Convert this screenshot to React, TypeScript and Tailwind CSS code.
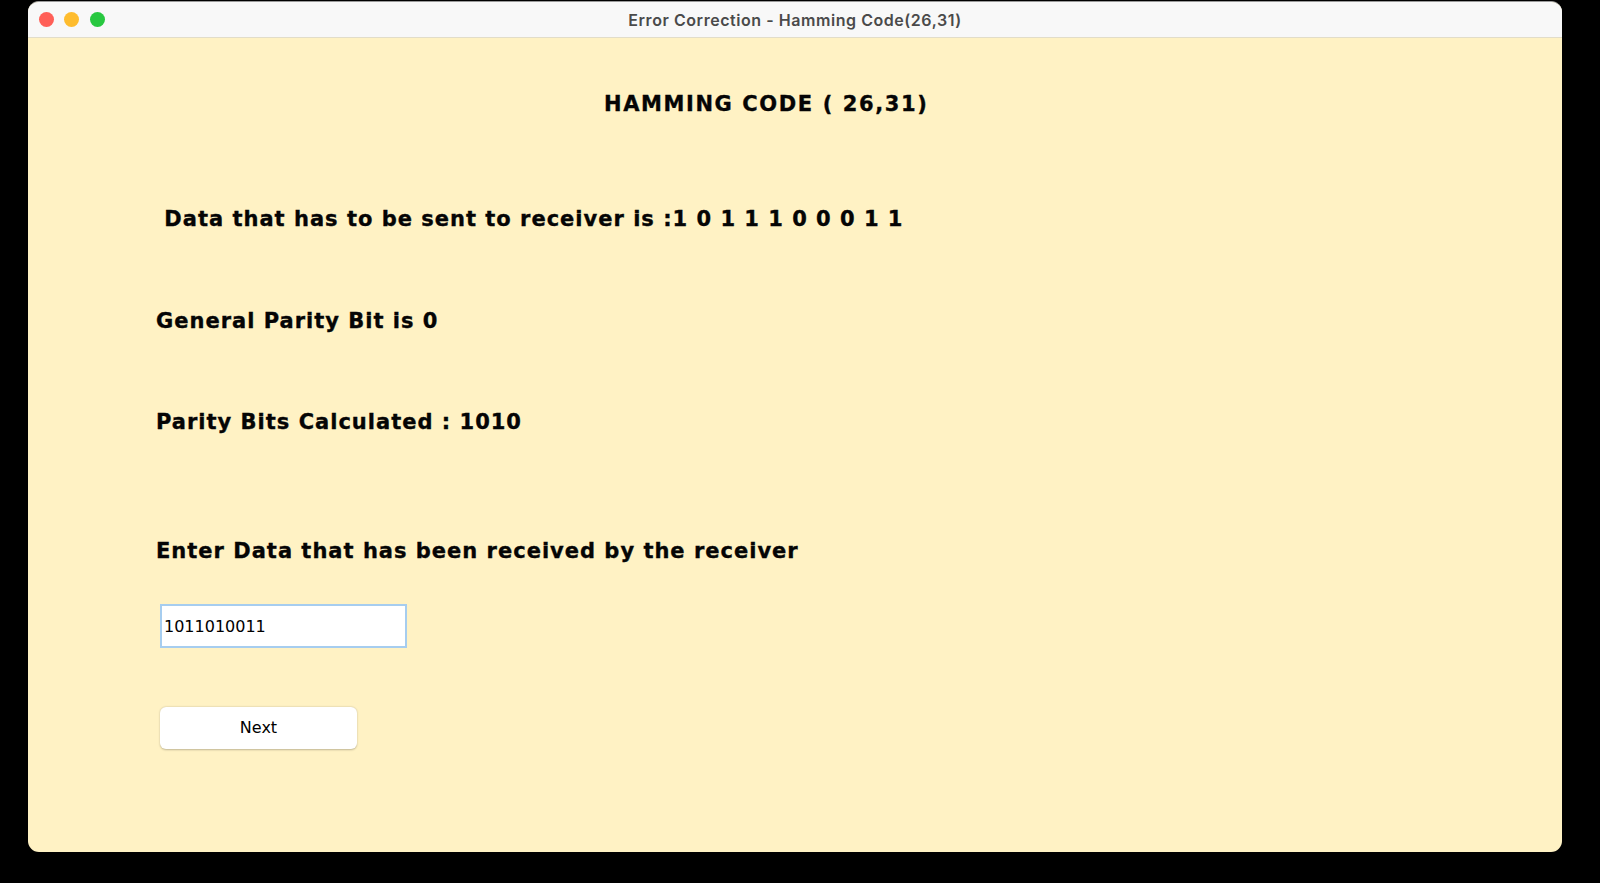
import React from "react";

export default function App() {
  const base =
    "font-['DejaVu_Sans',sans-serif] font-bold text-[21px] leading-[24px] text-[#050505] whitespace-pre [-webkit-text-stroke:0.35px_#050505]";
  const bold = `${base} tracking-[1px]`;
  return (
    <div className="w-[1600px] h-[883px] bg-black pt-[1px] pl-[28px] overflow-hidden">
      <div className="w-[1534px] h-[851px] rounded-[11px] overflow-hidden bg-[#fff2c4] flex flex-col border-t border-[#9a9a9a]">
        <div className="h-[36px] shrink-0 bg-[#f8f8f8] border-b border-[#e2ddc9] grid grid-cols-[1fr_auto_1fr] items-center">
          <div className="flex items-center gap-[10.5px] pl-[10.5px]">
            <div className="w-[15px] h-[15px] rounded-full bg-[#ff5f57]" />
            <div className="w-[15px] h-[15px] rounded-full bg-[#febc2e]" />
            <div className="w-[15px] h-[15px] rounded-full bg-[#28c840]" />
          </div>
          <div className="font-['Inter',sans-serif] font-semibold text-[16px] tracking-[0.55px] text-[#4a4a4a]">
            Error Correction - Hamming Code(26,31)
          </div>
          <div />
        </div>
        <div className="flex flex-col items-start pl-[128px]">
          <div className={`${base} tracking-[1.6px] mt-[54px] ml-[448px]`}>HAMMING CODE ( 26,31)</div>
          <div className={`${bold} mt-[91px]`}> Data that has to be sent to receiver is :1 0 1 1 1 0 0 0 1 1</div>
          <div className={`${bold} mt-[78px]`}>General Parity Bit is 0</div>
          <div className={`${bold} mt-[77px]`}>Parity Bits Calculated : 1010</div>
          <div className={`${bold} mt-[105px]`}>Enter Data that has been received by the receiver</div>
          <input
            readOnly
            value="1011010011"
            className="mt-[41px] ml-[4px] w-[247px] h-[44px] bg-white border-2 border-[#a6cdef] px-[2px] font-['DejaVu_Sans',sans-serif] text-[16px] text-black outline-none"
          />
          <button className="mt-[59px] ml-[4px] w-[197px] h-[42px] bg-white rounded-[6px] shadow-[0_0.5px_2px_rgba(0,0,0,0.25)] font-['DejaVu_Sans',sans-serif] text-[16px] text-black">
            Next
          </button>
        </div>
      </div>
    </div>
  );
}
